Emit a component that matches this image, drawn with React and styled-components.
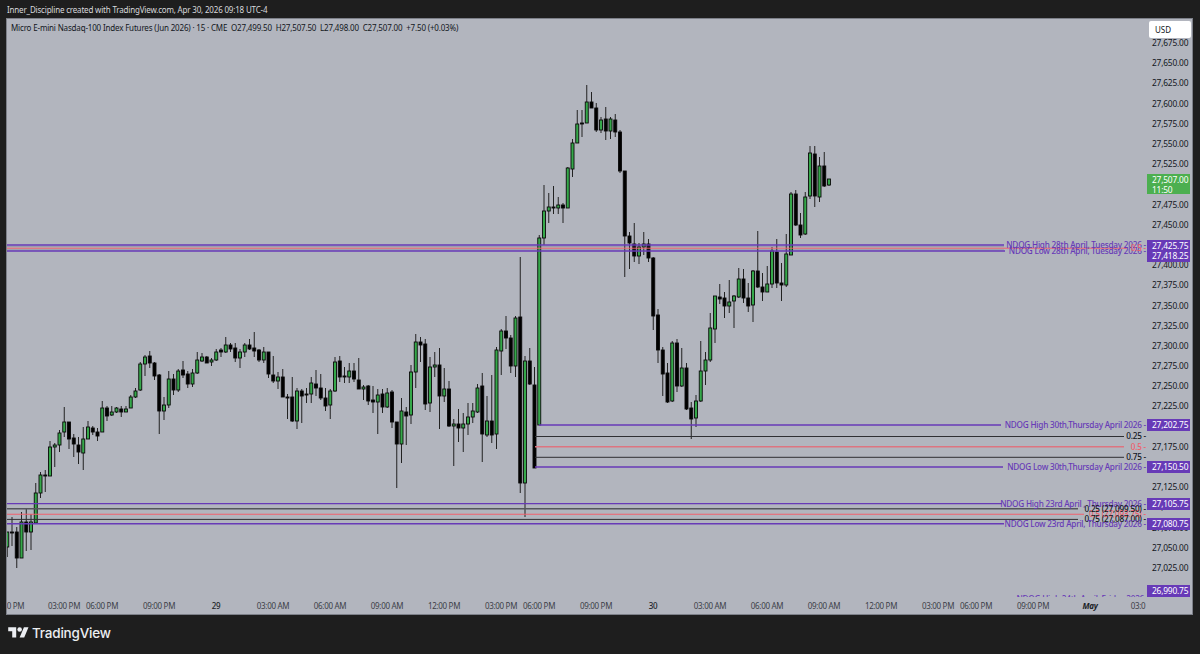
import React from 'react';
import styled, { createGlobalStyle } from 'styled-components';

const FONT = `"Noto Sans", "DejaVu Sans", sans-serif`;
const PURPLE = '#673ab7';
const RED = '#f0606c';
const DARK = '#131722';
const ORIGIN_X = 7;
const ORIGIN_Y = 19;

const Global = createGlobalStyle`
  html, body { margin: 0; padding: 0; background: #1e1e1e; }
  #root { width: 1200px; height: 654px; overflow: hidden; }
`;

const Page = styled.div`
  width: 1200px;
  height: 654px;
  display: flex;
  flex-direction: column;
  background: #1e1e1e;
  font-family: ${FONT};
`;
const Caption = styled.div`
  height: 18px;
  padding-left: 7px;
  display: flex;
  align-items: center;
  font-size: 8px;
  letter-spacing: -0.18px;
  color: #d8d9dd;
  white-space: nowrap;
`;
const Frame = styled.div`
  box-sizing: border-box;
  width: 1187px;
  height: 597px;
  margin-left: 6px;
  border: 1px solid #7d8089;
  background: #b2b5be;
  display: grid;
  grid-template-columns: 1140px 45px;
  grid-template-rows: 578px 17px;
  overflow: hidden;
`;
const Pane = styled.div`
  position: relative;
  overflow: hidden;
`;
const Plot = styled.svg`
  display: block;
  width: 1138px;
  height: 578px;
`;
const Legend = styled.div`
  position: absolute;
  left: 4px;
  top: 3px;
  font-size: 8px;
  letter-spacing: -0.17px;
  line-height: 11px;
  color: ${DARK};
  white-space: pre;
`;
const Anchor = styled.div`
  position: absolute;
  right: 1px;
  transform: translateY(-50%);
  font-size: 8.2px;
  font-weight: 500;
  letter-spacing: -0.22px;
  line-height: 10px;
  white-space: pre;
  color: ${(p) => p.$color};
`;
const PriceScale = styled.div`
  position: relative;
  grid-row: 1 / span 2;
  grid-column: 2;
  overflow: hidden;
`;
const Tick = styled.div`
  position: absolute;
  left: 5px;
  transform: translateY(-50%);
  margin-top: -1px;
  font-size: 8.4px;
  letter-spacing: -0.2px;
  line-height: 11px;
  color: ${DARK};
`;
const PriceBox = styled.div`
  position: absolute;
  left: 0;
  width: 43px;
  height: 12px;
  transform: translateY(-50%);
  background: ${PURPLE};
  color: #fff;
  font-size: 8.4px;
  letter-spacing: -0.2px;
  line-height: 12px;
  padding-left: 5px;
  box-sizing: border-box;
`;
const LastBox = styled.div`
  position: absolute;
  left: 0;
  top: 155px;
  width: 43px;
  height: 20px;
  background: #4caf50;
  color: #fff;
  font-size: 8.4px;
  letter-spacing: -0.2px;
  line-height: 9.5px;
  padding: 1px 0 0 5px;
  box-sizing: border-box;
`;
const Currency = styled.div`
  position: absolute;
  left: 2px;
  top: 2px;
  width: 42px;
  height: 17px;
  background: #fff;
  border-radius: 2px;
  color: ${DARK};
  font-size: 8px;
  line-height: 17px;
  padding-left: 6px;
  box-sizing: border-box;
`;
const TimeScale = styled.div`
  position: relative;
  overflow: hidden;
`;
const TimeLabel = styled.div`
  position: absolute;
  top: 3px;
  transform: translateX(-50%);
  font-size: 8px;
  letter-spacing: -0.3px;
  line-height: 11px;
  white-space: nowrap;
  color: ${(p) => (p.$major ? '#1c1f28' : '#3c3f48')};
  font-weight: ${(p) => (p.$italic ? 700 : p.$major ? 500 : 400)};
  font-style: ${(p) => (p.$italic ? 'italic' : 'normal')};
`;
const Footer = styled.div`
  flex: 1;
  padding: 8px 0 0 8px;
  display: flex;
  align-items: flex-start;
  gap: 3px;
  color: #eceef2;
`;
const LogoMark = styled.svg`
  width: 21px;
  height: 16px;
  margin-top: 2px;
`;
const Brand = styled.span`
  font-family: Inter, "Noto Sans", sans-serif;
  font-size: 13.5px;
  font-weight: 500;
  line-height: 20px;
  letter-spacing: -0.2px;
`;

// [high y, low y, body top y, body bottom y, green]
const G = 1, B = 0;
const CANDLES = [
  [532,557,532,547,G],[517,546,532,533,B],[527,568,532,558,B],[512,558,522,558,G],[509,551,522,532,B],[514,550,522,532,G],
  [483,523,493,523,G],[472,498,475,493,G],[470,492,475,476,B],[441,476,447,476,G],[443,467,445,447,G],[430,452,433,445,G],
  [407,437,422,432,G],[422,449,422,439,B],[434,457,438,444,B],[437,464,445,452,B],[427,470,439,453,G],[421,439,427,439,G],
  [426,435,428,432,B],[428,441,432,436,B],[401,432,408,432,G],[406,421,408,416,B],[406,416,412,415,G],[407,413,408,412,G],
  [406,417,409,412,B],[406,412,409,412,G],[395,408,397,408,G],[388,398,391,397,G],[362,391,364,390,G],[355,376,357,364,G],
  [351,368,356,363,B],[362,380,363,376,B],[374,434,375,411,B],[397,420,405,411,G],[371,408,379,405,G],[374,395,379,390,B],
  [369,392,371,390,G],[361,378,370,375,B],[371,388,374,384,B],[369,387,373,384,G],[352,374,360,373,G],
  [353,362,357,361,G],[356,363,357,363,B],[358,366,360,362,G],[349,361,352,360,G],[348,357,350,352,B],[337,353,345,352,G],
  [343,352,345,349,B],[343,362,348,358,B],[349,368,352,358,G],[343,357,345,352,G],[339,350,345,349,B],[332,357,348,351,B],
  [349,362,350,360,B],[347,363,352,360,G],[352,378,352,374,B],[356,383,375,381,B],[372,389,377,381,G],[369,397,377,397,B],
  [394,419,397,398,B],[377,422,397,421,B],[388,429,391,421,G],[389,423,391,396,B],[388,403,394,395,B],[377,403,383,394,G],
  [370,396,384,388,B],[374,400,388,398,B],[388,411,398,406,B],[389,419,391,405,G],[357,392,362,391,G],[356,382,361,377,B],
  [367,383,376,377,B],[363,383,371,377,G],[363,382,371,379,B],[358,389,380,389,B],[385,400,387,389,G],[385,405,386,401,B],
  [386,413,400,402,B],[389,434,395,402,G],[389,413,394,407,B],[388,408,393,407,G],[390,428,392,422,B],[422,488,422,444,B],
  [398,463,411,444,G],[407,445,412,416,B],[365,424,372,415,G],[334,388,342,372,G],[337,362,342,345,B],[339,410,344,404,B],
  [357,412,367,403,G],[352,377,365,367,G],[348,429,365,396,B],[368,402,389,396,G],[381,427,389,426,B],[419,466,424,426,G],
  [409,442,424,428,B],[413,452,424,428,G],[403,435,417,424,G],[403,423,411,417,G],[384,413,388,412,G],[373,462,386,434,B],
  [396,437,421,435,G],[375,443,421,435,B],[347,449,350,434,G],[329,375,331,351,G],[316,349,331,338,B],[335,373,338,366,B],
  [316,377,318,366,G],[257,493,317,483,B],[356,517,361,483,G],[348,385,361,384,B],[367,468,385,468,B],[235,425,238,425,G],
  [185,245,211,238,G],[193,223,207,211,G],[186,214,207,208,B],[197,214,205,208,G],[203,223,205,208,B],[167,208,168,208,G],
  [139,177,143,169,G],[110,143,124,143,G],[110,137,123,124,B],[85,123,102,123,G],[92,108,102,108,B],[103,132,108,130,B],
  [117,133,120,130,G],[107,140,119,131,B],[117,139,119,131,G],[114,137,120,132,B],[130,173,132,171,B],[171,277,171,236,B],
  [232,269,236,243,B],[223,262,244,256,B],[243,264,247,256,G],[232,255,244,247,G],[239,262,244,258,B],[257,330,258,316,B],
  [309,363,315,350,B],[347,396,350,374,B],[363,403,373,402,B],[341,402,343,401,G],[339,392,343,386,B],[348,387,368,386,G],
  [363,410,368,409,B],[402,439,408,419,B],[395,427,401,418,G],[341,402,371,401,G],[352,385,360,371,G],[313,362,328,360,G],
  [296,343,296,329,G],[284,304,297,299,B],[292,318,298,306,B],[280,313,302,306,G],[295,328,296,301,G],[268,298,279,297,G],
  [269,303,279,298,B],[283,312,298,306,B],[270,322,271,305,G],[231,288,271,287,B],[273,301,287,292,B],[266,292,284,292,G],
  [247,288,251,284,G],[239,288,252,283,B],[263,301,283,285,B],[234,287,254,285,G],[192,255,194,255,G],[190,226,194,225,B],
  [213,238,225,235,B],[192,235,197,234,G],[146,199,153,196,G],[146,207,154,196,B],[157,202,166,197,G],[152,187,166,186,B],
  [179,186,179,185,G],
];
const candleX = (i) => 7.25 + i * 4.75;

const PRICE_Y = (p) => 43 + (27675 - p) * 0.8077;

const LEVELS = [
  { x1: 6, x2: 1004, y: 245, c: PURPLE, w: 1.3 },
  { x1: 6, x2: 1004, y: 246.6, c: '#5a5a80', w: 0.3 },
  { x1: 6, x2: 1127, y: 248.2, c: RED, w: 1 },
  { x1: 6, x2: 1004, y: 249.8, c: '#5a5a80', w: 0.3 },
  { x1: 6, x2: 1005, y: 251, c: PURPLE, w: 1.3 },
  { x1: 539, x2: 1001, y: 425, c: PURPLE, w: 1.3 },
  { x1: 535, x2: 1124, y: 436.5, c: '#2f2f33', w: 1 },
  { x1: 535, x2: 1124, y: 446.8, c: '#dd7480', w: 1.4 },
  { x1: 535, x2: 1124, y: 457.3, c: '#2f2f33', w: 1 },
  { x1: 535, x2: 1003, y: 467, c: PURPLE, w: 1.3 },
  { x1: 6, x2: 1002, y: 503.6, c: PURPLE, w: 1.3 },
  { x1: 6, x2: 1078, y: 508.8, c: '#55565c', w: 1.4 },
  { x1: 6, x2: 1084, y: 514.2, c: RED, w: 1.1 },
  { x1: 6, x2: 1078, y: 519.4, c: '#2f2f33', w: 1 },
  { x1: 6, x2: 1004, y: 523.8, c: PURPLE, w: 1.4 },
];

const ANNOTATIONS = [
  { y: 245, t: 'NDOG High 28th April, Tuesday 2026 -', c: PURPLE },
  { y: 251, t: 'NDOG Low 28th April, Tuesday 2026 -', c: PURPLE },
  { y: 248, t: '0.5 -', c: RED },
  { y: 425, t: 'NDOG High 30th,Thursday April 2026 -', c: PURPLE },
  { y: 436.3, t: '0.25 -', c: DARK },
  { y: 446.7, t: '0.5 -', c: RED },
  { y: 457, t: '0.75 -', c: DARK },
  { y: 467, t: 'NDOG Low 30th,Thursday April 2026 -', c: PURPLE },
  { y: 503.5, t: 'NDOG High 23rd April , Thursday 2026 -', c: PURPLE },
  { y: 514, t: '0.5 (27,093.75) -', c: RED },
  { y: 509, t: '0.25 (27,099.50) -', c: DARK },
  { y: 519, t: '0.75 (27,087.00) -', c: DARK },
  { y: 524, t: 'NDOG Low 23rd April, Thursday 2026 -', c: PURPLE },
  { y: 598.5, t: 'NDOG High 24th April, Friday 2026 ', c: PURPLE },
];

const TICKS = [];
for (let p = 27675; p >= 27025; p -= 25) {
  if (![27500, 27425, 27200, 27150].includes(p)) TICKS.push(p);
}
const fmt = (p) => p.toLocaleString('en-US', { minimumFractionDigits: 2 });

const BOXES = [
  ['27,425.75', 245.5], ['27,418.25', 256], ['27,202.75', 425], ['27,150.50', 467],
  ['27,105.75', 503.5], ['27,080.75', 524], ['26,990.75', 591],
];

const TIMES = [
  ['0 PM', 15.5], ['03:00 PM', 64], ['06:00 PM', 102], ['09:00 PM', 159], ['29', 216, 1],
  ['03:00 AM', 273], ['06:00 AM', 330], ['09:00 AM', 387], ['12:00 PM', 444], ['03:00 PM', 501],
  ['06:00 PM', 539], ['09:00 PM', 596], ['30', 653, 1], ['03:00 AM', 710], ['06:00 AM', 767],
  ['09:00 AM', 824], ['12:00 PM', 881], ['03:00 PM', 938], ['06:00 PM', 976], ['09:00 PM', 1033],
  ['May', 1090, 1, 1], ['03:0', 1138],
];

function Candle({ i, data }) {
  const [hi, lo, top, bot, green] = data;
  const x = candleX(i);
  return (
    <g>
      <line x1={x} x2={x} y1={hi} y2={lo} stroke="#222" strokeWidth="1" />
      <rect
        x={x - 1.5}
        y={top}
        width="3"
        height={Math.max(bot - top, 1)}
        fill={green ? '#35a84a' : '#000'}
        stroke="#0a0a0a"
        strokeWidth="0.9"
      />
    </g>
  );
}

export default function App() {
  return (
    <Page>
      <Global />
      <Caption>Inner_Discipline created with TradingView.com, Apr 30, 2026 09:18 UTC-4</Caption>
      <Frame>
        <Pane>
          <Plot viewBox={`${ORIGIN_X} ${ORIGIN_Y} 1138 578`}>
            {CANDLES.map((c, i) => (
              <Candle key={i} i={i} data={c} />
            ))}
            {LEVELS.map((l, i) => (
              <line key={i} x1={l.x1} x2={l.x2} y1={l.y} y2={l.y} stroke={l.c} strokeWidth={l.w} />
            ))}
          </Plot>
          <Legend>{'Micro E-mini Nasdaq-100 Index Futures (Jun 2026) · 15 · CME  O27,499.50  H27,507.50  L27,498.00  C27,507.00  +7.50 (+0.03%)'}</Legend>
          {ANNOTATIONS.map((a) => (
            <Anchor key={a.t + a.y} $color={a.c} style={{ top: a.y - ORIGIN_Y }}>
              {a.t}
            </Anchor>
          ))}
        </Pane>
        <PriceScale>
          {TICKS.map((p) => (
            <Tick key={p} style={{ top: PRICE_Y(p) - ORIGIN_Y }}>
              {fmt(p)}
            </Tick>
          ))}
          <Currency>USD</Currency>
          <LastBox>
            27,507.00
            <br />
            11:50
          </LastBox>
          {BOXES.map(([t, y]) => (
            <PriceBox key={t} style={{ top: y - ORIGIN_Y }}>
              {t}
            </PriceBox>
          ))}
        </PriceScale>
        <TimeScale>
          {TIMES.map(([t, x, major, italic], i) => (
            <TimeLabel key={i} $major={major} $italic={italic} style={{ left: x - ORIGIN_X }}>
              {t}
            </TimeLabel>
          ))}
        </TimeScale>
      </Frame>
      <Footer>
        <LogoMark viewBox="0 0 36 28" fill="currentColor">
          <path d="M14 22H7V11H0V4h14v18zM28 22h-8l7.5-18h8L28 22z" />
          <circle cx="20" cy="8" r="4" />
        </LogoMark>
        <Brand>TradingView</Brand>
      </Footer>
    </Page>
  );
}
